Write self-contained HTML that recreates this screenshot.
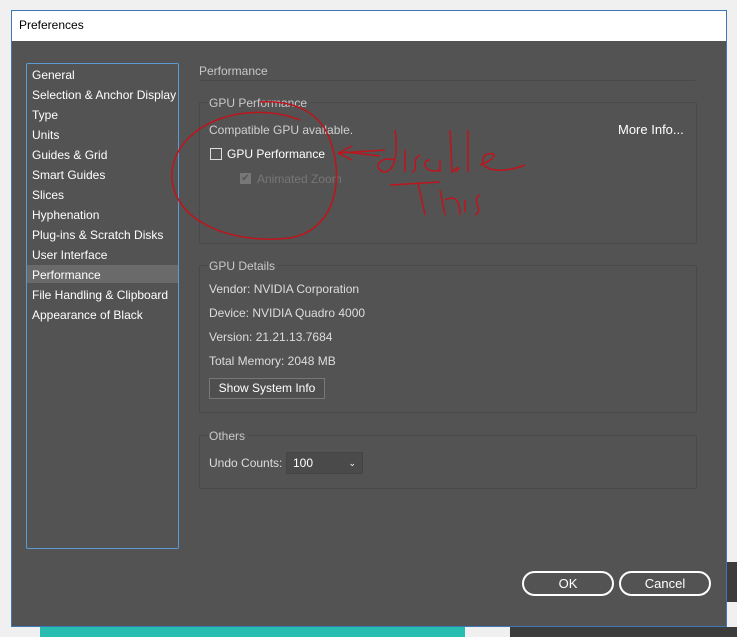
<!DOCTYPE html>
<html><head><style>
body{margin:0;width:737px;height:637px;background:#f0f0f0;position:relative;overflow:hidden;font-family:"Liberation Sans",sans-serif;font-size:12px;color:#e6e6e6}
.a{position:absolute}
.t{white-space:nowrap}
.box{position:absolute;border:1px solid #494949;border-radius:2px}
.btn{position:absolute;border:2px solid #fff;border-radius:13px;color:#fff;text-align:center;line-height:21px;font-size:13px}
</style></head><body>
<div class="a" style="left:40px;top:627px;width:425px;height:10px;background:#27bdb0"></div>
<div class="a" style="left:510px;top:627px;width:227px;height:10px;background:#3c3c3c"></div>
<div class="a" style="left:727px;top:562px;width:10px;height:40px;background:#3c3c3c"></div>
<div class="a" style="left:11px;top:10px;width:714px;height:615px;border:1px solid #3b78b5;background:#535353"></div>
<div class="a" style="left:12px;top:11px;width:714px;height:30px;background:#fff"></div>
<div class="a t" style="left:19px;top:18px;color:#000;font-size:12px">Preferences</div>
<div class="a" style="left:26px;top:63px;width:151px;height:484px;border:1px solid #5b9bd5;border-radius:2px"></div>
<div class="a" style="left:27px;top:265px;width:151px;height:18px;background:#6a6a6a"></div>
<div class="a" style="left:32px;top:65px;line-height:20px;font-size:12px;color:#fff">General<br>Selection &amp; Anchor Display<br>Type<br>Units<br>Guides &amp; Grid<br>Smart Guides<br>Slices<br>Hyphenation<br>Plug-ins &amp; Scratch Disks<br>User Interface<br>Performance<br>File Handling &amp; Clipboard<br>Appearance of Black</div>
<div class="a t" style="left:199px;top:64px;color:#c8c8c8">Performance</div>
<div class="a" style="left:199px;top:80px;width:496px;height:1px;background:#4a4a4a"></div>
<div class="box" style="left:199px;top:102px;width:496px;height:140px"></div>
<div class="a t" style="left:209px;top:96px;color:#c8c8c8;background:#535353;padding-right:3px">GPU Performance</div>
<div class="a t" style="left:209px;top:123px;color:#d0d0d0">Compatible GPU available.</div>
<div class="a t" style="left:618px;top:122px;color:#fff;font-size:13px">More Info...</div>
<div class="a" style="left:210px;top:148px;width:10px;height:10px;border:1px solid #ddd"></div>
<div class="a t" style="left:227px;top:147px;color:#fff">GPU Performance</div>
<div class="a" style="left:240px;top:173px;width:11px;height:11px;background:#777;color:#555;font-size:10px;line-height:11px;text-align:center">✔</div>
<div class="a t" style="left:257px;top:172px;color:#777">Animated Zoom</div>
<div class="box" style="left:199px;top:265px;width:496px;height:146px"></div>
<div class="a t" style="left:209px;top:259px;color:#c8c8c8;background:#535353;padding-right:3px">GPU Details</div>
<div class="a" style="left:209px;top:277px;line-height:24px;color:#ddd">Vendor: NVIDIA Corporation<br>Device: NVIDIA Quadro 4000<br>Version: 21.21.13.7684<br>Total Memory: 2048 MB</div>
<div class="a" style="left:209px;top:378px;width:114px;height:19px;border:1px solid #777;background:#4f4f4f;color:#fff;text-align:center;line-height:19px">Show System Info</div>
<div class="box" style="left:199px;top:435px;width:496px;height:52px"></div>
<div class="a t" style="left:209px;top:429px;color:#c8c8c8;background:#535353;padding-right:3px">Others</div>
<div class="a t" style="left:209px;top:456px;color:#ddd">Undo Counts:</div>
<div class="a" style="left:286px;top:452px;width:75px;height:20px;background:#4a4a4a;border:1px solid #444;color:#fff;line-height:20px"><span style="padding-left:6px">100</span><span style="position:absolute;right:6px;font-size:9px">&#8964;</span></div>
<div class="btn" style="left:522px;top:571px;width:88px;height:21px">OK</div>
<div class="btn" style="left:619px;top:571px;width:88px;height:21px">Cancel</div>
<svg class="a" style="left:0;top:0" width="737" height="637" fill="none" stroke="#c0141c" stroke-width="1.5">
<path d="M300 120 C250 100 180 120 172 170 C168 220 230 245 290 238 C335 230 345 180 330 140 C320 110 290 100 260 102"/>
<path d="M338 153 L385 150 M338 153 L352 146 M338 153 L352 160 M345 152 L380 156"/>
<path d="M395 130 C398 150 396 170 385 172 C372 170 378 155 395 160 M405 150 L405 172 M420 155 C410 160 420 170 412 172 M430 160 C420 160 425 175 440 170 M440 160 L440 172 M450 130 L452 172 C458 165 462 168 455 172 M468 130 L468 172 M480 165 C495 160 500 150 485 155 C475 170 500 175 525 165"/>
<path d="M390 185 L440 182 M418 183 L425 215 M440 190 L445 215 M445 200 C455 195 460 200 460 215 M465 200 L465 212 M480 195 C470 200 485 210 475 215"/>
</svg>
</body></html>
